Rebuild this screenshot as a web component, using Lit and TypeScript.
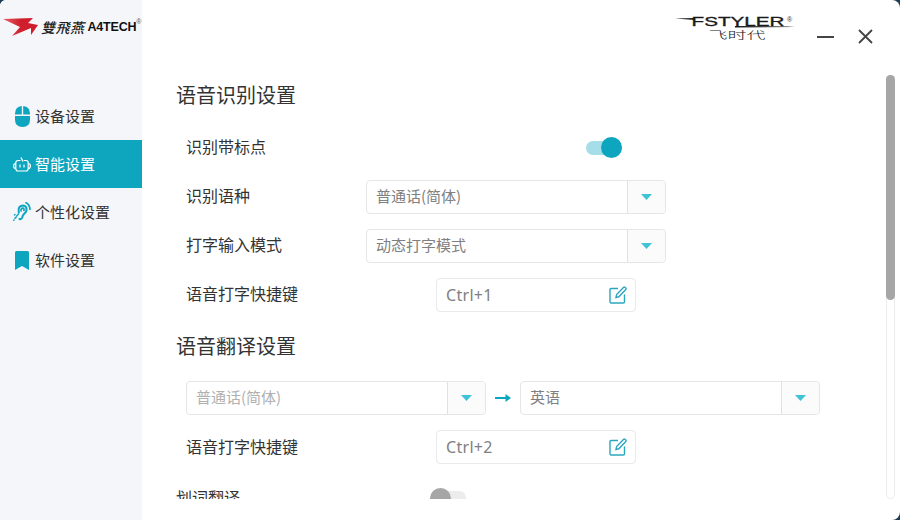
import { LitElement, html, css } from "lit";
import { customElement } from "lit/decorators.js";

const chevron = html`<svg class="caret" width="11" height="6" viewBox="0 0 11 6"><path d="M0 0H11L5.5 6Z" fill="#3fc3d6"/></svg>`;
const edit = html`<svg class="edit" width="18" height="18" viewBox="0 0 18 18" fill="none" stroke="#2ba6c0" stroke-width="1.4"><path d="M9 2.500H2.200Q1 2.500 1 3.700V15.800Q1 17 2.200 17H14.300Q15.500 17 15.500 15.800V8.500"/><path d="M7 11.500L7.600 8.500L14.700 1.300Q15.300 .7 16 1.300L16.800 2.100Q17.400 2.800 16.800 3.400L9.800 10.800Z"/></svg>`;

@customElement("app-root")
export class AppRoot extends LitElement {
  static styles = css`
    :host { display: block; width: 900px; height: 520px; background: #1d3a52; font-family: "Noto Sans CJK SC", "Noto Sans", sans-serif; color: #333; }
    .win { width: 900px; height: 520px; display: flex; background: #fff; border-radius: 6px 8px 8px 0; overflow: hidden; }
    .side { width: 142px; flex: none; background: #f5f6f9; display: flex; flex-direction: column; }
    .brand { height: 92px; padding: 18px 0 0 3px; box-sizing: border-box; display: flex; align-items: flex-start; }
    .brand svg { flex: none; margin-right: 3px; }
    .zh { font: italic 500 14px/18px "Noto Sans CJK TC", sans-serif; color: #222; letter-spacing: .5px; white-space: nowrap; }
    .en { font: 700 12.500px/18px "Liberation Sans", sans-serif; color: #111; margin-left: 3px; white-space: nowrap; letter-spacing: -.2px; }
    .reg { font: 7px/7px "Liberation Sans", sans-serif; color: #555; }
    .nav { height: 48px; display: flex; align-items: center; font-size: 15px; color: #333; box-sizing: border-box; }
    .nav svg { flex: none; display: block; }
    .ic { width: 35px; display: flex; justify-content: center; padding-left: 9px; box-sizing: border-box; }
    .txt { padding-bottom: 2px; }
    .nav.on { background: #0ea6bf; color: #fff; }
    .main { flex: 1; min-width: 0; display: flex; flex-direction: column; }
    .top { height: 75px; flex: none; display: flex; justify-content: flex-end; align-items: flex-start; }
    .fs { width: 124px; margin: 16px 18px 0 0; display: flex; flex-direction: column; align-items: center; position: relative; }
    .fs-t { font: 400 12px/12px "Liberation Sans", sans-serif; color: #1a1a1a; transform: scaleX(1.72); -webkit-text-stroke: .3px #1a1a1a; white-space: nowrap; margin-left: 3px; }
    .fs-r { position: absolute; top: 0; left: 112px; font: 7px/7px "Liberation Sans", sans-serif; color: #333; }
    .fs-line { position: absolute; top: 0; left: 0; display: block; }
    .fs-c { font: 300 10px/10px "Noto Sans CJK SC", sans-serif; color: #222; transform: scaleX(1.9); margin-top: 2px; }
    .wb { display: flex; align-items: center; gap: 24px; margin: 29px 27px 0 0; }
    .wb svg { display: block; }
    .body { flex: 1; min-height: 0; display: flex; margin-bottom: 21px; }
    .content { flex: 1; min-width: 0; overflow: hidden; padding-left: 34px; }
    .bar { width: 9px; flex: none; margin-right: 5px; border-radius: 5px; border: 1px solid #ececec; border-top: none; box-sizing: border-box; }
    .thumb { height: 225px; margin: 0 -1px; background: #a6a6a6; border-radius: 5px; }
    h2 { margin: 0 0 8px; font-size: 20px; font-weight: 400; line-height: 40px; color: #333; }
    h2.next { margin: 7px 0 7.500px; }
    .row { height: 49px; display: flex; align-items: center; padding-left: 10px; font-size: 16px; color: #333; box-sizing: border-box; white-space: nowrap; }
    .row.flat { padding-left: 0; margin-top: 2px; }
    .lab { width: 180px; flex: none; padding-bottom: 3px; }
    .lab-w { width: 250px; flex: none; padding-bottom: 3px; }
    .lab-f { width: 254px; flex: none; padding-bottom: 2px; }
    .lab-s { width: 400px; flex: none; padding-bottom: 3px; }
    .sw { width: 36px; height: 14px; border-radius: 7px; background: #a5dde8; position: relative; flex: none; }
    .sw i { position: absolute; top: -3.500px; right: 0; width: 21px; height: 21px; border-radius: 50%; background: #0ea6bf; }
    .sw.off { background: #ececec; }
    .sw.off i { left: 0; right: auto; background: #a6a6a6; }
    .sel { width: 300px; height: 34px; flex: none; display: flex; border: 1px solid #e4e6ea; border-radius: 4px; box-sizing: border-box; font-size: 15px; color: #808080; background: #fff; }
    .sel span { flex: 1; padding-left: 9px; line-height: 30px; }
    .sel.dis { color: #b0b0b0; }
    .dd { width: 38px; flex: none; box-sizing: border-box; border-left: 1px solid #dfe1e5; display: flex; align-items: center; justify-content: center; background: #fbfbfb; border-radius: 0 4px 4px 0; }
    .key { width: 200px; height: 34px; flex: none; display: flex; align-items: center; justify-content: space-between; padding: 0 8px 0 9px; box-sizing: border-box; border: 1px solid #e8eaee; border-radius: 4px; font: 16px "Noto Sans", sans-serif; letter-spacing: .3px; color: #808080; }
    .arrow { width: 34px; flex: none; display: flex; justify-content: center; }
  `;

  private mouse() {
    return html`<svg width="15" height="21" viewBox="0 0 15 21" fill="#0ea6bf"><path d="M6.800 0V8.500H0V7.500Q0 .6 6.800 0Z"/><path d="M8.200 0V8.500H15V7.500Q15 .6 8.200 0Z"/><path d="M0 10H15V13.500Q15 21 7.500 21Q0 21 0 13.500Z"/></svg>`;
  }
  private robot() {
    return html`<svg width="18" height="15" viewBox="0 0 18 15" fill="none" stroke="#fff" stroke-width="1.200"><path d="M7.500 3.500H5Q2.800 3.500 2.800 5.800V11.500Q2.800 14 5 14H13Q15.200 14 15.200 11.500V5.800Q15.200 3.500 13 3.500H10.800"/><path d="M8 .5L10 4.500"/><path d="M2.800 6.500Q.6 6.500 .6 9Q.6 11.500 2.800 11.500M15.200 6.500Q17.400 6.500 17.400 9Q17.400 11.500 15.200 11.500M7 7.500V10.500M11 7.500V10.500"/></svg>`;
  }
  private ear() {
    return html`<svg width="18" height="20" viewBox="0 0 18 20" fill="none" stroke="#0ea6bf" stroke-linecap="round"><path d="M5.800 10.500Q4.500 4 9.800 3.500Q14 3.800 13.500 8.500Q13 10.500 11 12Q9.500 13.500 9.200 15.500Q8.500 17.500 6.500 17" stroke-width="2.100"/><path d="M8 9Q7.800 6.300 9.800 6.200Q11.300 6.400 11 8.500" stroke-width="1.700"/><path d="M13 .8Q16.800 2.800 17 7.500" stroke-width="1.700"/><path d="M5.500 12L4 13.500M3.500 14.800L2 16.300M1 18L.8 18.200" stroke-width="1.600"/><path d="M2 12.500L1.500 13" stroke-width="1.500"/></svg>`;
  }
  private bookmark() {
    return html`<svg width="14" height="19" viewBox="0 0 14 19"><path d="M0 1.500Q0 0 1.500 0H12.500Q14 0 14 1.500V19L7 15L0 19Z" fill="#0ea6bf"/></svg>`;
  }
  private select(text: string, dis = false) {
    return html`<div class="sel ${dis ? "dis" : ""}"><span>${text}</span><div class="dd">${chevron}</div></div>`;
  }
  private key(text: string) {
    return html`<div class="key">${text}${edit}</div>`;
  }

  render() {
    return html`<div class="win">
      <aside class="side">
        <div class="brand">
          <svg width="35" height="18" viewBox="0 0 35 18"><defs><linearGradient id="r" x1="0" x2="1" y1="0" y2="0"><stop offset="0" stop-color="#e8606a"/><stop offset=".5" stop-color="#cf1f2c"/></linearGradient></defs><path d="M0 1L30 0L25 5L35 7L28 17L28 10L9 18L17 9Z" fill="url(#r)"/></svg>
          <span class="zh">雙飛燕</span><span class="en">A4TECH</span><span class="reg">®</span>
        </div>
        <div class="nav"><div class="ic">${this.mouse()}</div><span class="txt">设备设置</span></div>
        <div class="nav on"><div class="ic">${this.robot()}</div><span class="txt">智能设置</span></div>
        <div class="nav"><div class="ic">${this.ear()}</div><span class="txt">个性化设置</span></div>
        <div class="nav"><div class="ic">${this.bookmark()}</div><span class="txt">软件设置</span></div>
      </aside>
      <main class="main">
        <div class="top">
          <div class="fs">
            <div class="fs-t">FSTYLER</div>
            <span class="fs-r">®</span>
            <svg class="fs-line" width="124" height="14" viewBox="0 0 124 14"><path d="M0 2.500L20 2L20 4Z" fill="#1a1a1a"/><path d="M60 10L112 10.500L120 11L60 11.500Z" fill="#1a1a1a"/></svg>
            <div class="fs-c">飞时代</div>
          </div>
          <div class="wb">
            <svg width="17" height="14" viewBox="0 0 17 14"><path d="M0 7H17" stroke="#444" stroke-width="2"/></svg>
            <svg width="15" height="15" viewBox="0 0 15 15"><path d="M1 1L14 14M14 1L1 14" stroke="#444" stroke-width="1.800"/></svg>
          </div>
        </div>
        <div class="body">
          <div class="content">
            <h2>语音识别设置</h2>
            <div class="row"><span class="lab-s">识别带标点</span><div class="sw"><i></i></div></div>
            <div class="row"><span class="lab">识别语种</span>${this.select("普通话(简体)")}</div>
            <div class="row"><span class="lab">打字输入模式</span>${this.select("动态打字模式")}</div>
            <div class="row"><span class="lab-w">语音打字快捷键</span>${this.key("Ctrl+1")}</div>
            <h2 class="next">语音翻译设置</h2>
            <div class="row">
              ${this.select("普通话(简体)", true)}
              <div class="arrow"><svg width="16" height="8" viewBox="0 0 16 8"><path d="M0 4H13" stroke="#0ea6bf" stroke-width="2"/><path d="M10.500 0L16 4L10.500 8Z" fill="#0ea6bf"/></svg></div>
              ${this.select("英语")}
            </div>
            <div class="row"><span class="lab-w">语音打字快捷键</span>${this.key("Ctrl+2")}</div>
            <div class="row flat"><span class="lab-f">划词翻译</span><div class="sw off"><i></i></div></div>
          </div>
          <div class="bar"><div class="thumb"></div></div>
        </div>
      </main>
    </div>`;
  }
}
